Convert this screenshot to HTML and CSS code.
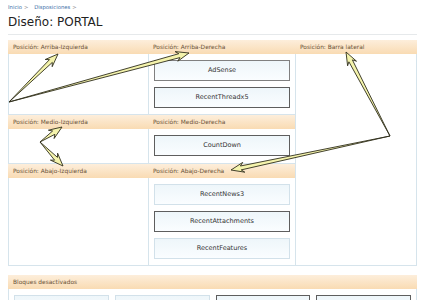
FILE: index.html
```html
<!DOCTYPE html>
<html lang="es">
<head>
  <meta charset="UTF-8" />
  <title>Diseño: PORTAL</title>
  <link rel="stylesheet" href="styles.css">
</head>
<body>
  <div class="page">
    <!-- Breadcrumb -->
    <nav class="crumbs">
      <a href="#">Inicio</a><span class="sep">&gt;</span>
      <a href="#">Disposiciones</a><span class="sep">&gt;</span>
    </nav>
    <h1 class="title">Diseño: PORTAL</h1>

    <!-- Positions grid -->
    <div class="layout">
      <div class="pos-head">Posición: Arriba-Izquierda</div>
      <div class="pos-head">Posición: Arriba-Derecha</div>
      <div class="pos-head">Posición: Barra lateral</div>

      <div class="pos-body left"></div>
      <div class="pos-body mid">
        <div class="block">AdSense</div>
        <div class="block dark">RecentThreadx5</div>
      </div>
      <div class="pos-body side"></div>

      <div class="pos-head">Posición: Medio-Izquierda</div>
      <div class="pos-head">Posición: Medio-Derecha</div>
      <div class="pos-body left"></div>
      <div class="pos-body mid">
        <div class="block dark">CountDown</div>
      </div>

      <div class="pos-head">Posición: Abajo-Izquierda</div>
      <div class="pos-head">Posición: Abajo-Derecha</div>
      <div class="pos-body left"></div>
      <div class="pos-body mid">
        <div class="block light">RecentNews3</div>
        <div class="block dark">RecentAttachments</div>
        <div class="block light">RecentFeatures</div>
      </div>
    </div>

    <div class="disabled">
      <div class="pos-head">Bloques desactivados</div>
      <div class="disabled-body">
        <div class="block light"></div>
        <div class="block light"></div>
        <div class="block dark"></div>
        <div class="block dark"></div>
      </div>
    </div>
  </div>

  <!-- Annotation arrows -->
  <svg class="notes" id="notes" width="423" height="300" viewBox="0 0 423 300"></svg>

  <script>
    // base x, base y, tip x, tip y
    const ARROWS = [
      [9, 102, 58, 54],
      [9, 102, 189, 53],
      [390, 136, 346, 52],
      [390, 136, 231, 170],
      [40, 142, 62, 127],
      [40, 142, 63, 166],
    ];

    const svg = document.getElementById("notes");

    function arrowPoints(bx, by, tx, ty) {
      const len = Math.hypot(tx - bx, ty - by);
      const ux = (tx - bx) / len, uy = (ty - by) / len;
      const nx = -uy, ny = ux;
      const h = 10, back = 3, ws = 2, hw = 5;
      const p = (d, w) => [tx - ux * d + nx * w, ty - uy * d + ny * w];
      return [
        [bx, by],
        p(h, ws), p(h + back, hw), [tx, ty],
        p(h + back, -hw), p(h, -ws),
      ].map((q) => q[0].toFixed(1) + "," + q[1].toFixed(1)).join(" ");
    }

    ARROWS.forEach(([bx, by, tx, ty]) => {
      const poly = document.createElementNS("http://www.w3.org/2000/svg", "polygon");
      poly.setAttribute("points", arrowPoints(bx, by, tx, ty));
      svg.appendChild(poly);
    });
  </script>
</body>
</html>
```

FILE: styles.css
```css
/* ===== Base ===== */
* { box-sizing: border-box; margin: 0; padding: 0; }
body {
  background: #fff;
  color: #333;
  font-family: "DejaVu Sans", Verdana, sans-serif;
  position: relative;
  overflow: hidden;
}
.page { padding: 3px 0 0 8px; width: 417px; }

/* ===== Header ===== */
.crumbs {
  font-size: 5.3px;
  line-height: 8px;
  height: 8px;
  color: #888;
}
.crumbs a { color: #3b6ea8; text-decoration: none; }
.crumbs .sep { margin: 0 4px 0 2px; }
.title {
  margin-top: 3px;
  font-size: 12px;
  line-height: 16px;
  font-weight: normal;
  color: #222;
  padding-bottom: 4px;
  border-bottom: 1px solid #e6e9eb;
  margin-bottom: 5px;
}

/* ===== Positions grid ===== */
.layout {
  display: grid;
  grid-template-columns: 140px 147px 122px;
  grid-template-rows: 14px 61px 14px 35px 14px 88px;
}
.pos-head {
  background: linear-gradient(#fdeedb, #f9dbb3);
  color: #6a5237;
  font-size: 5.9px;
  line-height: 14px;
  padding-left: 5px;
  white-space: nowrap;
}
.pos-body {
  background: #fff;
  border-left: 1px solid #d6e4ec;
  border-bottom: 1px solid #d6e4ec;
  padding: 6px 5px;
  display: flex;
  flex-direction: column;
  gap: 6px;
}
.pos-body.side {
  grid-column: 3;
  grid-row: 2 / 7;
  border-right: 1px solid #d6e4ec;
}

/* ===== Blocks ===== */
.block {
  height: 21px;
  line-height: 19px;
  text-align: center;
  font-size: 6.5px;
  color: #333;
  background: linear-gradient(#eef6fa, #fafdff);
  border: 1px solid #808080;
}
.block.dark { border-color: #5e5e5e; }
.block.light { border-color: #d2e1ea; }

/* ===== Disabled blocks ===== */
.disabled { margin-top: 9px; width: 409px; }
.disabled-body {
  border-left: 1px solid #d6e4ec;
  border-right: 1px solid #d6e4ec;
  padding: 6px 5px;
  display: flex;
  gap: 6px;
}
.disabled-body .block { flex: 1; }

/* ===== Annotation arrows ===== */
.notes {
  position: absolute;
  top: 0;
  left: 0;
  pointer-events: none;
}
.notes polygon {
  fill: #f4f3ac;
  stroke: #2f2e1c;
  stroke-width: 0.9;
  stroke-linejoin: miter;
}
```
